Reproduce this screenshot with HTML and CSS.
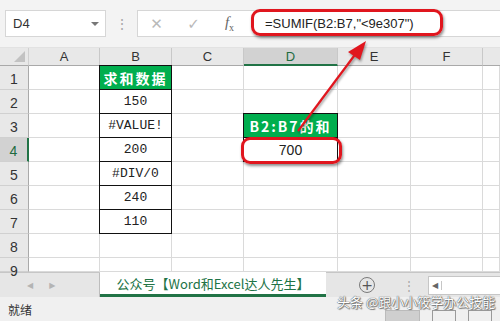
FILE: index.html
```html
<html lang="zh"><head>
    <meta charset="UTF-8">
    <title>SUMIF</title>
    <link rel="stylesheet" href="styles.css">
</head>
<body>
    <div id="app">
        <div class="formula-bar">
            <div class="name-box">
                <span>D4</span>
                <span class="drop"></span>
            </div>
            <div class="grip">⋮</div>
            <div class="formula-box">
                <span class="fb-icon x">✕</span>
                <span class="fb-icon ok">✓</span>
                <span class="fb-icon fx"><i>f</i><sub>x</sub></span>
                <span class="formula">=SUMIF(B2:B7,"&lt;9e307")</span>
            </div>
        </div>

        <div class="sheet">
            <div class="corner"><span class="tri"></span></div>
            <div class="ch">A</div>
            <div class="ch">B</div>
            <div class="ch">C</div>
            <div class="ch sel">D</div>
            <div class="ch">E</div>
            <div class="ch">F</div>
            <div class="ch last"></div>

            <div class="rh">1</div><div class="c"></div><div class="c box head">求和数据</div><div class="c"></div><div class="c"></div><div class="c"></div><div class="c"></div><div class="c"></div>
            <div class="rh">2</div><div class="c"></div><div class="c box">150</div><div class="c"></div><div class="c"></div><div class="c"></div><div class="c"></div><div class="c"></div>
            <div class="rh">3</div><div class="c"></div><div class="c box">#VALUE!</div><div class="c"></div><div class="c box head">B2:B7的和</div><div class="c"></div><div class="c"></div><div class="c"></div>
            <div class="rh sel">4</div><div class="c"></div><div class="c box">200</div><div class="c"></div><div class="c box sum">700</div><div class="c"></div><div class="c"></div><div class="c"></div>
            <div class="rh">5</div><div class="c"></div><div class="c box">#DIV/0</div><div class="c"></div><div class="c"></div><div class="c"></div><div class="c"></div><div class="c"></div>
            <div class="rh">6</div><div class="c"></div><div class="c box">240</div><div class="c"></div><div class="c"></div><div class="c"></div><div class="c"></div><div class="c"></div>
            <div class="rh">7</div><div class="c"></div><div class="c box">110</div><div class="c"></div><div class="c"></div><div class="c"></div><div class="c"></div><div class="c"></div>
            <div class="rh">8</div><div class="c"></div><div class="c"></div><div class="c"></div><div class="c"></div><div class="c"></div><div class="c"></div><div class="c"></div>
            <div class="rh">9</div><div class="c"></div><div class="c"></div><div class="c"></div><div class="c"></div><div class="c"></div><div class="c"></div><div class="c"></div>
        </div>

        <div class="tabs">
            <div class="nav"><span class="arr">◀</span><span class="arr">▶</span></div>
            <div class="tab">公众号【Word和Excel达人先生】</div>
            <div class="tab-rest">
                <span class="plus">+</span>
                <span class="grip small">⋮</span>
                <div class="hscroll"><span class="arr">◀</span></div>
            </div>
        </div>

        <div class="status">
            <span>就绪</span>
            <div class="views">
                <span class="view on"></span>
                <span class="view"></span>
                <span class="view"></span>
            </div>
            <span class="mark">头条 @跟小小筱学办公技能</span>
        </div>

        <div class="ring ring-formula"></div>
        <div class="ring ring-cell"></div>
        <svg class="arrow" width="500" height="321" viewBox="0 0 500 321">
            <line x1="298" y1="131" x2="357" y2="52" stroke="#e0161e" stroke-width="2.2"/>
            <polygon points="366,41 348,52 360,60" fill="#e0161e"/>
        </svg>
    </div>
</body></html>
```

FILE: styles.css
```css
body {
    margin: 0;
    font-family: "Noto Sans CJK SC", "Liberation Sans", sans-serif;
    background: #ffffff;
}
#app {
    position: relative;
    width: 500px;
    height: 321px;
    overflow: hidden;
}
.formula-bar {
    height: 48px;
    background: #f3f3f3;
    display: flex;
    align-items: flex-start;
    padding-top: 10px;
    box-sizing: border-box;
    border-bottom: 1px solid #e2e2e2;
}
.name-box {
    margin-left: 5px;
    width: 101px;
    height: 27px;
    background: #fff;
    border: 1px solid #d6d6d6;
    box-sizing: border-box;
    display: flex;
    align-items: center;
    justify-content: space-between;
    padding: 0 6px 0 7px;
    font-family: "Liberation Sans", sans-serif;
    font-size: 13px;
    color: #333;
}
.drop {
    width: 0;
    height: 0;
    border-left: 4px solid transparent;
    border-right: 4px solid transparent;
    border-top: 4px solid #777;
}
.grip {
    width: 31px;
    text-align: center;
    color: #a8a8a8;
    font-size: 14px;
    line-height: 27px;
}
.formula-box {
    flex: 1;
    height: 27px;
    background: #fff;
    border: 1px solid #d6d6d6;
    border-right: none;
    box-sizing: border-box;
    display: flex;
    align-items: center;
}
.fb-icon {
    color: #b9b9b9;
    font-size: 15px;
    width: 37px;
    text-align: center;
    font-family: "DejaVu Sans", sans-serif;
}
.fb-icon.fx {
    font-family: "Liberation Serif", serif;
    color: #666;
    font-size: 15px;
    width: 35px;
}
.fb-icon.fx sub { font-size: 10px; }
.formula {
    margin-left: 18px;
    font-family: "Liberation Sans", sans-serif;
    font-size: 13px;
    color: #222;
}

.sheet {
    display: grid;
    grid-template-columns: 29px 71px 72px 72px 94px 73px 72px 17px;
    grid-template-rows: 18px repeat(8, 24px) 14px;
    background: #fff;
}
.corner {
    background: #e8e8e8;
    border-right: 1px solid #d0d0d0;
    border-bottom: 1px solid #a9a9a9;
    position: relative;
}
.tri {
    position: absolute;
    right: 3px;
    bottom: 3px;
    width: 0;
    height: 0;
    border-left: 11px solid transparent;
    border-bottom: 11px solid #c2c2c2;
}
.ch {
    background: #e8e8e8;
    border-right: 1px solid #c8c8c8;
    border-bottom: 1px solid #a9a9a9;
    text-align: center;
    font-family: "Liberation Sans", sans-serif;
    font-size: 13px;
    line-height: 18px;
    color: #333;
}
.ch.sel {
    background: #d2d2d2;
    border-bottom: 2px solid #217346;
    color: #1e6b40;
}
.ch.last { border-right: none; }
.rh {
    background: #e8e8e8;
    border-right: 1px solid #a9a9a9;
    border-bottom: 1px solid #d0d0d0;
    text-align: center;
    font-family: "Liberation Sans", sans-serif;
    font-size: 14px;
    line-height: 26px;
    color: #333;
}
.rh.sel {
    background: #d2d2d2;
    border-right: 2px solid #217346;
    color: #1e6b40;
}
.c {
    border-right: 1px solid #dadada;
    border-bottom: 1px solid #dadada;
}
.c.box {
    border: 1px solid #111;
    margin: -1px 0 0 -1px;
    display: flex;
    align-items: center;
    justify-content: center;
    font-family: "Liberation Mono", monospace;
    font-size: 13px;
    color: #222;
}
.c.head {
    background: #00ae4e;
    color: #fff;
    font-family: "Noto Sans CJK SC", sans-serif;
    font-weight: bold;
    font-size: 14px;
    letter-spacing: 2px;
}
.c.head:first-of-type { letter-spacing: 3px; }
.c.sum {
    font-family: "Liberation Sans", sans-serif;
    font-size: 14px;
}

.tabs {
    height: 25px;
    display: flex;
    background: #e6e6e6;
    border-top: 1px solid #c6c6c6;
    box-sizing: border-box;
}
.nav {
    width: 100px;
    display: flex;
    align-items: center;
    gap: 16px;
    padding-left: 27px;
    box-sizing: border-box;
    border-right: 1px solid #bdbdbd;
}
.arr {
    font-size: 8px;
    color: #b4b4b4;
    font-family: "DejaVu Sans", sans-serif;
}
.tab {
    width: 226px;
    background: #fff;
    border-bottom: 3px solid #217346;
    margin-top: -1px;
    box-sizing: border-box;
    text-align: center;
    color: #217346;
    font-size: 13px;
    line-height: 24px;
    white-space: nowrap;
}
.tab-rest {
    flex: 1;
    display: flex;
    align-items: center;
}
.plus {
    margin-left: 33px;
    width: 14px;
    height: 14px;
    border: 1px solid #7a7a7a;
    border-radius: 50%;
    text-align: center;
    line-height: 14px;
    font-size: 14px;
    color: #555;
    font-family: "DejaVu Sans", sans-serif;
}
.grip.small {
    width: auto;
    margin-left: 28px;
    font-size: 12px;
    line-height: 20px;
}
.hscroll {
    margin-left: 13px;
    flex: 1;
    height: 17px;
    background: #fff;
    border: 1px solid #c6c6c6;
    border-right: none;
    display: flex;
    align-items: center;
}
.hscroll .arr {
    width: 12px;
    text-align: center;
    border-right: 1px solid #c6c6c6;
    color: #666;
}

.status {
    height: 24px;
    background: #f0f0f0;
    display: flex;
    align-items: center;
    padding-left: 8px;
    font-size: 12px;
    color: #333;
    position: relative;
}
.views {
    position: absolute;
    left: 385px;
    bottom: 0;
    display: flex;
    gap: 12px;
}
.view {
    width: 24px;
    height: 11px;
    border: 1px solid #9a9a9a;
    border-bottom: none;
    box-sizing: border-box;
}
.view.on {
    width: 35px;
    background: #cfcfcf;
    border-color: #bbb;
}
.mark {
    position: absolute;
    left: 337px;
    top: -5px;
    font-size: 13px;
    white-space: nowrap;
    color: #fff;
    text-shadow: 0 0 1px #555, 0 0 1px #555, 1px 1px 1px #777;
}

.ring {
    position: absolute;
    border: 3px solid #e0161e;
    border-radius: 9px;
    box-shadow: 1px 2px 3px rgba(0, 0, 0, 0.45);
    box-sizing: border-box;
}
.ring-formula {
    left: 251px;
    top: 9px;
    width: 192px;
    height: 27px;
}
.ring-cell {
    left: 241px;
    top: 137px;
    width: 101px;
    height: 27px;
}
.arrow {
    position: absolute;
    left: 0;
    top: 0;
    filter: drop-shadow(1px 2px 1px rgba(0, 0, 0, 0.35));
}
```
